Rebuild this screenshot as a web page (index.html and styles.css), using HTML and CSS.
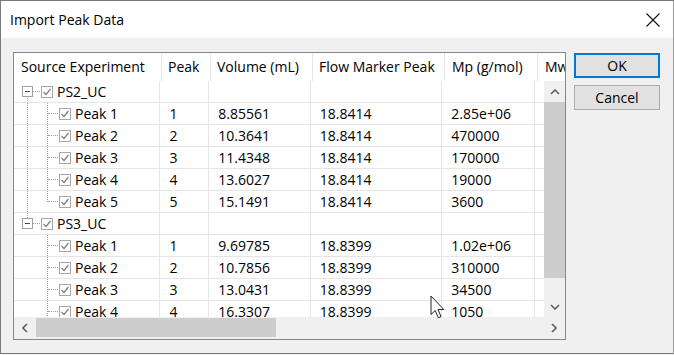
FILE: index.html
```html
<!DOCTYPE html>
<html>
<head>
<meta charset="utf-8">
<link rel="stylesheet" href="styles.css">
</head>
<body>
<div class="window">
  <div class="titlebar">
    <span class="title">Import Peak Data</span>
    <svg class="close" width="14" height="14" viewBox="0 0 14 14"><path d="M0.5 0.5 L13.5 13.5 M13.5 0.5 L0.5 13.5" stroke="#111" stroke-width="1.1" fill="none"/></svg>
  </div>
  <div class="content">
    <div class="listbox">
      <div class="header">
        <div class="hc c1">Source Experiment</div>
        <div class="hc c2">Peak</div>
        <div class="hc c3">Volume (mL)</div>
        <div class="hc c4">Flow Marker Peak</div>
        <div class="hc c5">Mp (g/mol)</div>
        <div class="hc c6">Mw</div>
      </div>
      <div class="body">
        <div class="rows">
          <div class="row">
            <div class="cell c1 tc root-first"><span class="expander"></span><span class="arm arm-root"></span><span class="check"></span><span class="label">PS2_UC</span></div>
            <div class="cell c2"></div><div class="cell c3"></div><div class="cell c4"></div><div class="cell c5"></div><div class="cell c6"></div>
          </div>
          <div class="row">
            <div class="cell c1 tc g1 child"><span class="arm"></span><span class="check"></span><span class="label">Peak 1</span></div>
            <div class="cell c2">1</div><div class="cell c3">8.85561</div><div class="cell c4">18.8414</div><div class="cell c5">2.85e+06</div><div class="cell c6"></div>
          </div>
          <div class="row">
            <div class="cell c1 tc g1 child"><span class="arm"></span><span class="check"></span><span class="label">Peak 2</span></div>
            <div class="cell c2">2</div><div class="cell c3">10.3641</div><div class="cell c4">18.8414</div><div class="cell c5">470000</div><div class="cell c6"></div>
          </div>
          <div class="row">
            <div class="cell c1 tc g1 child"><span class="arm"></span><span class="check"></span><span class="label">Peak 3</span></div>
            <div class="cell c2">3</div><div class="cell c3">11.4348</div><div class="cell c4">18.8414</div><div class="cell c5">170000</div><div class="cell c6"></div>
          </div>
          <div class="row">
            <div class="cell c1 tc g1 child"><span class="arm"></span><span class="check"></span><span class="label">Peak 4</span></div>
            <div class="cell c2">4</div><div class="cell c3">13.6027</div><div class="cell c4">18.8414</div><div class="cell c5">19000</div><div class="cell c6"></div>
          </div>
          <div class="row">
            <div class="cell c1 tc g1 child-last"><span class="arm"></span><span class="check"></span><span class="label">Peak 5</span></div>
            <div class="cell c2">5</div><div class="cell c3">15.1491</div><div class="cell c4">18.8414</div><div class="cell c5">3600</div><div class="cell c6"></div>
          </div>
          <div class="row">
            <div class="cell c1 tc root-last"><span class="expander"></span><span class="arm arm-root"></span><span class="check"></span><span class="label">PS3_UC</span></div>
            <div class="cell c2"></div><div class="cell c3"></div><div class="cell c4"></div><div class="cell c5"></div><div class="cell c6"></div>
          </div>
          <div class="row">
            <div class="cell c1 tc child"><span class="arm"></span><span class="check"></span><span class="label">Peak 1</span></div>
            <div class="cell c2">1</div><div class="cell c3">9.69785</div><div class="cell c4">18.8399</div><div class="cell c5">1.02e+06</div><div class="cell c6"></div>
          </div>
          <div class="row">
            <div class="cell c1 tc child"><span class="arm"></span><span class="check"></span><span class="label">Peak 2</span></div>
            <div class="cell c2">2</div><div class="cell c3">10.7856</div><div class="cell c4">18.8399</div><div class="cell c5">310000</div><div class="cell c6"></div>
          </div>
          <div class="row">
            <div class="cell c1 tc child"><span class="arm"></span><span class="check"></span><span class="label">Peak 3</span></div>
            <div class="cell c2">3</div><div class="cell c3">13.0431</div><div class="cell c4">18.8399</div><div class="cell c5">34500</div><div class="cell c6"></div>
          </div>
          <div class="row">
            <div class="cell c1 tc child"><span class="arm"></span><span class="check"></span><span class="label">Peak 4</span></div>
            <div class="cell c2">4</div><div class="cell c3">16.3307</div><div class="cell c4">18.8399</div><div class="cell c5">1050</div><div class="cell c6"></div>
          </div>
        </div>
        <div class="vscroll">
          <div class="sb-btn"><svg width="10" height="6" viewBox="0 0 10 6"><path d="M1 5 L5 1 L9 5" stroke="#606060" stroke-width="1.6" fill="none"/></svg></div>
          <div class="vthumb"></div>
          <div class="sb-track"></div>
          <div class="sb-btn"><svg width="10" height="6" viewBox="0 0 10 6"><path d="M1 1 L5 5 L9 1" stroke="#606060" stroke-width="1.6" fill="none"/></svg></div>
        </div>
      </div>
      <div class="hscroll">
        <div class="hb-btn"><svg width="6" height="10" viewBox="0 0 6 10"><path d="M5 1 L1 5 L5 9" stroke="#606060" stroke-width="1.6" fill="none"/></svg></div>
        <div class="hthumb"></div>
        <div class="sb-track"></div>
        <div class="hb-btn"><svg width="6" height="10" viewBox="0 0 6 10"><path d="M1 1 L5 5 L1 9" stroke="#606060" stroke-width="1.6" fill="none"/></svg></div>
      </div>
    </div>
    <div class="buttons">
      <button class="btn btn-default">OK</button>
      <button class="btn">Cancel</button>
    </div>
  </div>
  <svg class="cursor" width="16" height="25" viewBox="0 0 16 25"><path d="M1 1 L1 19.5 L5.2 15.5 L8.3 22.8 L11 21.6 L8 14.5 L13.8 14.5 Z" fill="#fff" stroke="#222" stroke-width="1"/></svg>
</div>
</body>
</html>
```
FILE: styles.css
```css
html, body {
  margin: 0;
  padding: 0;
  background: #f0f0f0;
}
.window {
  position: relative;
  width: 674px;
  height: 354px;
  box-sizing: border-box;
  border: 1px solid #7a7a7a;
  border-right-color: #9a9a9a;
  background: #f0f0f0;
  display: flex;
  flex-direction: column;
  font-family: "Open Sans", "Noto Sans", sans-serif;
  font-size: 14px;
  color: #000;
  overflow: hidden;
}
.titlebar {
  height: 37px;
  flex: none;
  background: #fff;
  display: flex;
  align-items: center;
  justify-content: space-between;
  padding: 0 13px 0 9px;
}
.title {
  font-size: 14px;
  color: #000;
}
.close { display: block; margin-top: 1px; }
.content {
  display: flex;
  padding: 14px 0 0 12px;
  gap: 8px;
}
.listbox {
  width: 553px;
  height: 288px;
  box-sizing: border-box;
  border: 1px solid #828790;
  background: #fff;
  display: flex;
  flex-direction: column;
  overflow: hidden;
}
.header {
  height: 28px;
  flex: none;
  display: flex;
}
.hc {
  box-sizing: border-box;
  border-right: 1px solid #e5e5e5;
  line-height: 27px;
  padding-left: 6px;
  white-space: nowrap;
  overflow: hidden;
}
.hc.c1 { width: 148px; padding-left: 7px; }
.hc.c2 { width: 49px; }
.hc.c3 { width: 102px; }
.hc.c4 { width: 132px; }
.hc.c5 { width: 93px; padding-left: 7px; }
.hc.c6 { flex: 1; border-right: none; padding-left: 7px; }
.body {
  height: 236px;
  flex: none;
  display: flex;
}
.rows {
  width: 530px;
  overflow: hidden;
}
.row {
  display: flex;
  height: 22px;
  box-sizing: border-box;
  border-bottom: 1px solid #e5e5e5;
}
.row:first-child { border-top: none; }
.cell {
  box-sizing: border-box;
  border-right: 1px solid #e5e5e5;
  line-height: 21px;
  padding-left: 9px;
  white-space: nowrap;
}
.cell.c1 { width: 147px; padding-left: 0; }
.cell.c2 { width: 49px; }
.cell.c3 { width: 102px; }
.cell.c4 { width: 132px; }
.cell.c5 { width: 93px; }
.cell.c6 { flex: 1; border-right: none; }

/* tree */
.tc {
  display: flex;
  align-items: center;
  background-repeat: no-repeat;
}
.expander {
  width: 11px;
  height: 11px;
  box-sizing: border-box;
  margin-left: 8px;
  border: 1px solid #a0a0a0;
  background: #fff linear-gradient(#4a4a4a, #4a4a4a) center / 5px 1px no-repeat;
  flex: none;
}
.arm {
  width: 10px;
  height: 0;
  margin-left: 34px;
  border-top: 1px dotted #a0a0a0;
  flex: none;
}
.arm.arm-root {
  width: 7px;
  margin-left: 0;
}
.check {
  width: 12px;
  height: 12px;
  box-sizing: border-box;
  border: 1px solid #a8a8a8;
  margin-left: 1px;
  flex: none;
  background: #fff url("data:image/svg+xml;utf8,<svg xmlns='http://www.w3.org/2000/svg' width='10' height='10' viewBox='0 0 10 10'><path d='M1.5 5 L4 7.5 L8.5 2' stroke='%23808080' stroke-width='1.2' fill='none'/></svg>") center / 10px 10px no-repeat;
}
.label {
  margin-left: 4px;
}
.root-first {
  background-image: repeating-linear-gradient(#a0a0a0 0 1px, transparent 1px 2px);
  background-size: 1px 50%;
  background-position: 13px 100%;
}
.root-last {
  background-image: repeating-linear-gradient(#a0a0a0 0 1px, transparent 1px 2px);
  background-size: 1px 50%;
  background-position: 13px 0;
}
.child {
  background-image: repeating-linear-gradient(#a0a0a0 0 1px, transparent 1px 2px);
  background-size: 1px 22px;
  background-position: 33px 0;
}
.child-last {
  background-image: repeating-linear-gradient(#a0a0a0 0 1px, transparent 1px 2px);
  background-size: 1px 11px;
  background-position: 33px 0;
}
.g1.child, .g1.child-last {
  background-image:
    repeating-linear-gradient(#a0a0a0 0 1px, transparent 1px 2px),
    repeating-linear-gradient(#a0a0a0 0 1px, transparent 1px 2px);
  background-position: 13px 0, 33px 0;
}
.g1.child { background-size: 1px 22px, 1px 22px; }
.g1.child-last { background-size: 1px 22px, 1px 11px; }

/* scrollbars */
.vscroll {
  width: 21px;
  flex: none;
  background: #f0f0f0;
  display: flex;
  flex-direction: column;
}
.sb-btn {
  height: 21px;
  flex: none;
  display: flex;
  align-items: center;
  justify-content: center;
}
.sb-btn svg, .hb-btn svg { display: block; }
.vthumb {
  height: 176px;
  flex: none;
  background: #cdcdcd;
}
.sb-track { flex: 1; }
.hscroll {
  height: 22px;
  flex: none;
  background: #f0f0f0;
  display: flex;
  align-items: center;
}
.hb-btn {
  width: 22px;
  height: 22px;
  flex: none;
  display: flex;
  align-items: center;
  justify-content: center;
}
.hthumb {
  width: 240px;
  height: 19px;
  flex: none;
  background: #cdcdcd;
  margin-top: -1px;
}

/* buttons */
.buttons {
  display: flex;
  flex-direction: column;
  gap: 7px;
  padding-top: 1px;
}
.btn {
  width: 86px;
  height: 25px;
  box-sizing: border-box;
  border: 1px solid #adadad;
  background: #e1e1e1;
  font-family: "Open Sans", "Noto Sans", sans-serif;
  font-size: 14px;
  color: #000;
  padding: 0;
  margin: 0;
}
.btn-default {
  border: 2px solid #0078d7;
}
.cursor {
  position: absolute;
  left: 429px;
  top: 294px;
}
```
